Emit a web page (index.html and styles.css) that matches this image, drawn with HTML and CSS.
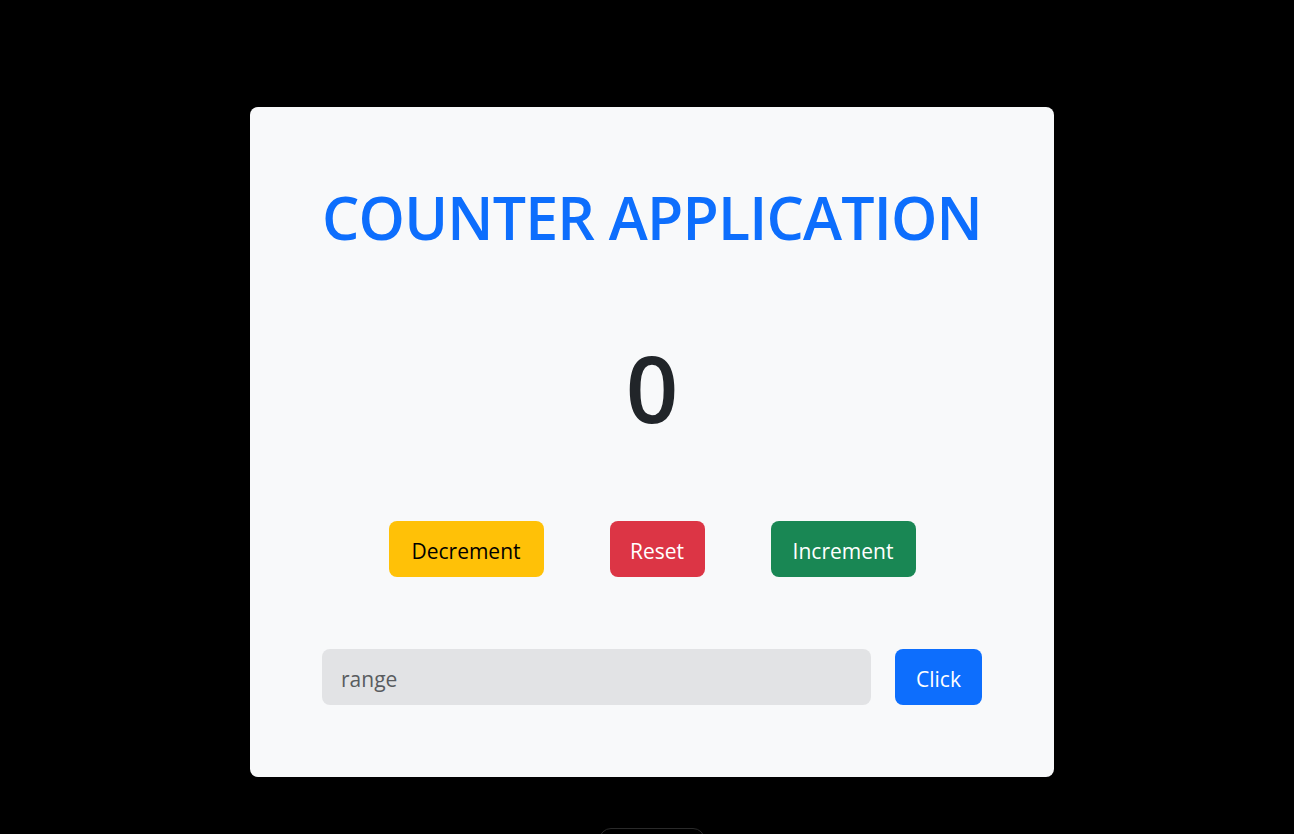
FILE: index.html
```html
<!DOCTYPE html>
<html lang="en">
<head>
<meta charset="utf-8">
<title>Counter Application</title>
<link rel="stylesheet" href="styles.css">
</head>
<body>
<main class="page">
  <section class="card">
    <h1 class="title">COUNTER APPLICATION</h1>
    <div class="count">0</div>
    <div class="actions">
      <button class="btn btn-warning">Decrement</button>
      <button class="btn btn-danger">Reset</button>
      <button class="btn btn-success">Increment</button>
    </div>
    <div class="range-row">
      <input class="range-input" type="text" placeholder="range">
      <button class="btn btn-primary">Click</button>
    </div>
  </section>
  <div class="footer-pill"></div>
</main>
</body>
</html>
```
FILE: styles.css
```css
* { box-sizing: border-box; }
html, body { margin: 0; padding: 0; background: #000; }
body {
  font-family: "Open Sans", "Noto Sans", "Liberation Sans", sans-serif;
  height: 834px;
  overflow: hidden;
}
.page {
  display: flex;
  flex-direction: column;
  align-items: center;
  padding-top: 107px;
  padding-left: 10px;
}
.card {
  width: 804px;
  height: 670px;
  background: #f8f9fa;
  border-radius: 8px;
  padding: 72px 72px;
  display: flex;
  flex-direction: column;
}
.title {
  margin: 0;
  text-align: center;
  color: #0d6efd;
  font-weight: 600;
  font-size: 59px;
  line-height: 76px;
  letter-spacing: -0.8px;
  white-space: nowrap;
}
.count {
  margin-top: 73px;
  text-align: center;
  color: #212529;
  font-size: 92px;
  font-weight: 600;
  line-height: 120px;
}
.actions {
  margin-top: 73px;
  display: flex;
  justify-content: center;
  gap: 66px;
}
.btn {
  font-family: inherit;
  font-size: 21px;
  height: 56px;
  padding: 3px 0 0;
  border: 0;
  border-radius: 8px;
  color: #fff;
}
.btn-warning { background: #ffc107; color: #000; width: 155px; }
.btn-danger { background: #dc3545; width: 95px; }
.btn-success { background: #198754; width: 145px; }
.btn-primary { background: #0d6efd; width: 87px; }
.range-row {
  margin-top: 72px;
  display: flex;
  gap: 24px;
}
.range-input {
  flex: 1;
  height: 56px;
  border: 0;
  border-radius: 8px;
  background: #e2e3e5;
  padding: 3px 19px 0;
  font-family: inherit;
  font-size: 21px;
  color: #212529;
  outline: none;
}
.range-input::placeholder { color: #595c5f; }
.footer-pill {
  margin-top: 51px;
  width: 106px;
  height: 40px;
  border: 1px solid #2a2a2a;
  border-radius: 12px;
}
```
